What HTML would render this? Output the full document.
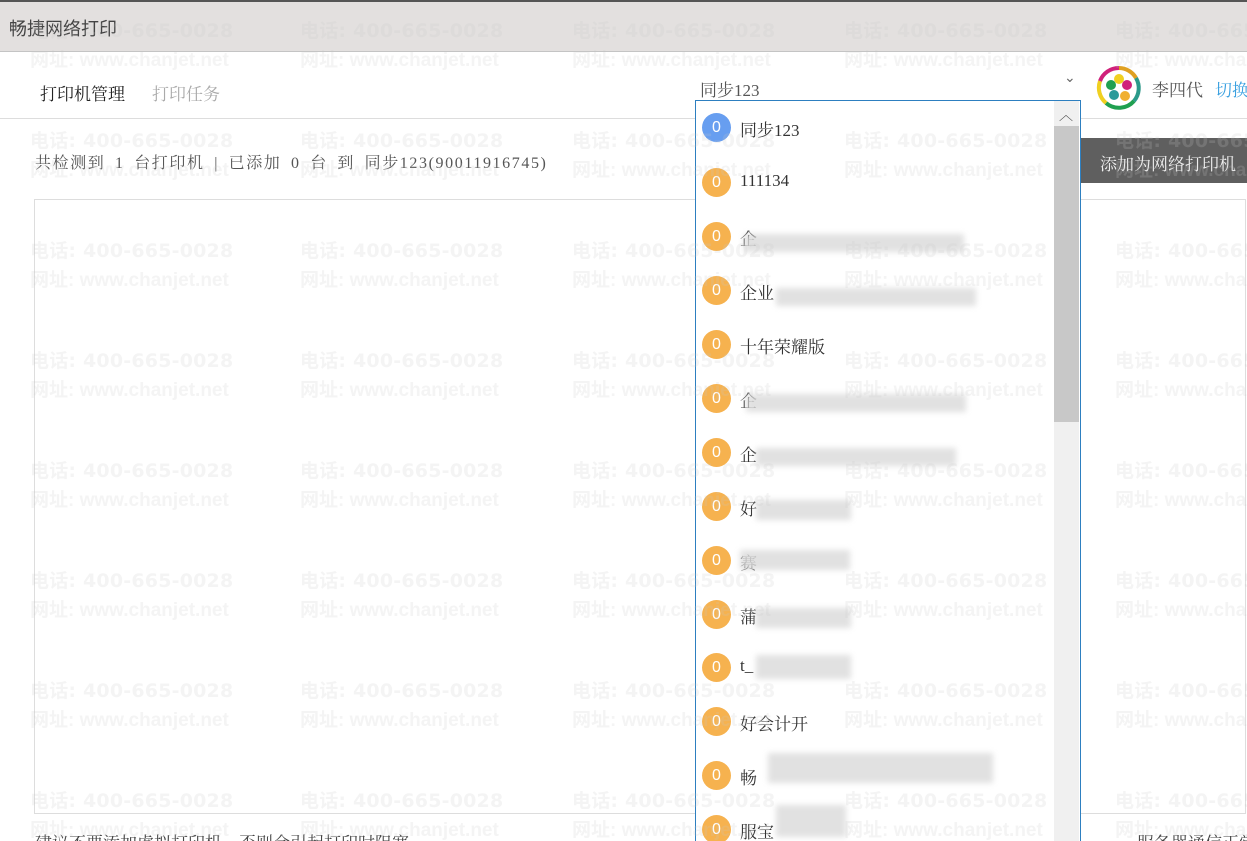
<!DOCTYPE html>
<html><head><meta charset="utf-8"><style>
*{margin:0;padding:0;box-sizing:border-box}
html,body{width:1247px;height:841px;overflow:hidden;background:#fff;font-family:"Liberation Serif","Noto Serif CJK SC","Noto Sans CJK SC",serif;position:relative}
.title{position:absolute;left:0;top:0;width:1247px;height:52px;background:#e3e0df;border-top:2px solid #555;border-bottom:1px solid #c4c4c4}
.title span{position:absolute;left:9px;top:13px;font-size:18px;color:#444;font-family:"Liberation Sans","Noto Sans CJK SC",sans-serif}
.abs{position:absolute;white-space:nowrap}
.wm{position:absolute;font-family:"DejaVu Sans","Noto Sans CJK SC",sans-serif;font-size:19px;font-weight:bold;color:rgba(200,200,200,0.2);white-space:nowrap;z-index:50;pointer-events:none;line-height:20px;letter-spacing:0.2px}
.wm2{font-family:"Liberation Sans","Noto Sans CJK SC",sans-serif;font-size:19px;letter-spacing:0}
.dd{position:absolute;left:695px;top:100px;width:386px;height:760px;border:1px solid #2d7fc0;background:#fff;z-index:10;overflow:hidden}
.it{position:absolute;left:0;height:30px;width:360px}
.it .c{position:absolute;left:6px;top:0;width:29px;height:29px;border-radius:50%;background:#f6b24f;color:#fff;font-size:16px;text-align:center;line-height:29px;font-family:"Liberation Sans",sans-serif}
.it .t{position:absolute;left:44px;top:3px;font-size:17px;color:#333}
.bl{position:absolute;background:#dcdcdc;filter:blur(3px);opacity:.85}
</style></head><body>
<div class="title"><span>畅捷网络打印</span></div>
<div class="abs" style="left:40px;top:80px;font-size:17px;color:#222">打印机管理</div>
<div class="abs" style="left:152px;top:80px;font-size:17px;color:#aaa">打印任务</div>
<div style="position:absolute;left:0;top:118px;width:1247px;height:1px;background:#ddd"></div>
<div class="abs" style="left:700px;top:76px;font-size:17px;color:#555">同步123</div>
<div class="abs" style="left:1064px;top:70px;font-size:14px;color:#666">⌄</div>
<svg style="position:absolute;left:1096px;top:65px" width="46" height="46" viewBox="0 0 46 46">
<circle cx="23" cy="23" r="20" fill="none" stroke="#eee" stroke-width="4"/>
<path d="M23 3 A20 20 0 0 1 40 13" stroke="#e0a020" stroke-width="4" fill="none"/>
<path d="M40 13 A20 20 0 0 1 38 36" stroke="#2a9a8a" stroke-width="4" fill="none"/>
<path d="M38 36 A20 20 0 0 1 10 38" stroke="#20a050" stroke-width="4" fill="none"/>
<path d="M10 38 A20 20 0 0 1 4 16" stroke="#f0d020" stroke-width="4" fill="none"/>
<path d="M4 16 A20 20 0 0 1 23 3" stroke="#d0207a" stroke-width="4" fill="none"/>
<circle cx="23" cy="14" r="5" fill="#f0d020"/><circle cx="31" cy="20" r="5" fill="#d0207a"/>
<circle cx="29" cy="31" r="5" fill="#f0b030"/><circle cx="18" cy="30" r="5" fill="#2a9a9a"/><circle cx="15" cy="20" r="5" fill="#20a050"/>
</svg>
<div class="abs" style="left:1152px;top:76px;font-size:17px;color:#555">李四代</div>
<div class="abs" style="left:1215px;top:76px;font-size:17px;color:#3aa0e0">切换</div>
<div class="abs" style="left:35px;top:150px;font-size:16px;color:#555;letter-spacing:1.6px;word-spacing:4px">共检测到 1 台打印机 | 已添加 0 台 到 同步123(90011916745)</div>
<div class="abs" style="left:1080px;top:138px;width:167px;height:45px;background:#5f5f5f;color:#eee;font-size:17px;padding:12px 0 0 20px">添加为网络打印机</div>
<div style="position:absolute;left:34px;top:199px;width:1212px;height:615px;border:1px solid #ddd"></div>
<div class="abs" style="left:35px;top:829px;font-size:17px;color:#444">建议不要添加虚拟打印机，否则会引起打印时阻塞</div>
<div class="abs" style="left:1137px;top:829px;font-size:17px;color:#444">服务器通信正常</div>

<div class="dd">
<div style="position:absolute;left:358px;top:0;width:25px;height:760px;background:#f0f0f0"></div>
<div style="position:absolute;left:358px;top:25px;width:25px;height:296px;background:#c8c8c8"></div>
<div class="abs" style="left:363px;top:4px;font-size:14px;color:#444;font-weight:bold">︿</div>
<div class="it" style="top:12px"><div class="c" style="background:#679ef0">0</div><div class="t">同步123</div></div>
<div class="it" style="top:67px"><div class="c">0</div><div class="t">111134</div></div>
<div class="it" style="top:121px"><div class="c">0</div><div class="t">企</div><div class="bl" style="left:48px;top:12px;width:220px;height:18px"></div></div>
<div class="it" style="top:175px"><div class="c">0</div><div class="t">企业</div><div class="bl" style="left:80px;top:12px;width:200px;height:18px"></div></div>
<div class="it" style="top:229px"><div class="c">0</div><div class="t">十年荣耀版</div></div>
<div class="it" style="top:283px"><div class="c">0</div><div class="t">企</div><div class="bl" style="left:50px;top:10px;width:220px;height:18px"></div></div>
<div class="it" style="top:337px"><div class="c">0</div><div class="t">企</div><div class="bl" style="left:60px;top:10px;width:200px;height:18px"></div></div>
<div class="it" style="top:391px"><div class="c">0</div><div class="t">好</div><div class="bl" style="left:60px;top:8px;width:95px;height:20px"></div></div>
<div class="it" style="top:445px"><div class="c">0</div><div class="t">赛</div><div class="bl" style="left:44px;top:4px;width:110px;height:20px"></div></div>
<div class="it" style="top:499px"><div class="c">0</div><div class="t">蒲</div><div class="bl" style="left:60px;top:8px;width:95px;height:20px"></div></div>
<div class="it" style="top:552px"><div class="c">0</div><div class="t">t_</div><div class="bl" style="left:60px;top:2px;width:95px;height:24px"></div></div>
<div class="it" style="top:606px"><div class="c">0</div><div class="t">好会计开</div></div>
<div class="it" style="top:660px"><div class="c">0</div><div class="t">畅</div><div class="bl" style="left:72px;top:-8px;width:225px;height:30px"></div></div>
<div class="it" style="top:714px"><div class="c">0</div><div class="t">服宝</div><div class="bl" style="left:80px;top:-10px;width:70px;height:32px"></div></div>
</div>

<div id="wms"></div>
<script>
var h='';var xs=[30,300,572,844,1115];for(var r=0;r<8;r++){var y=21+r*110;for(var i=0;i<5;i++){h+='<div class="wm" style="left:'+xs[i]+'px;top:'+y+'px">电话: 400-665-0028</div><div class="wm wm2" style="left:'+xs[i]+'px;top:'+(y+30)+'px">网址: www.chanjet.net</div>';}}
document.getElementById('wms').innerHTML=h;
</script>
</body></html>
